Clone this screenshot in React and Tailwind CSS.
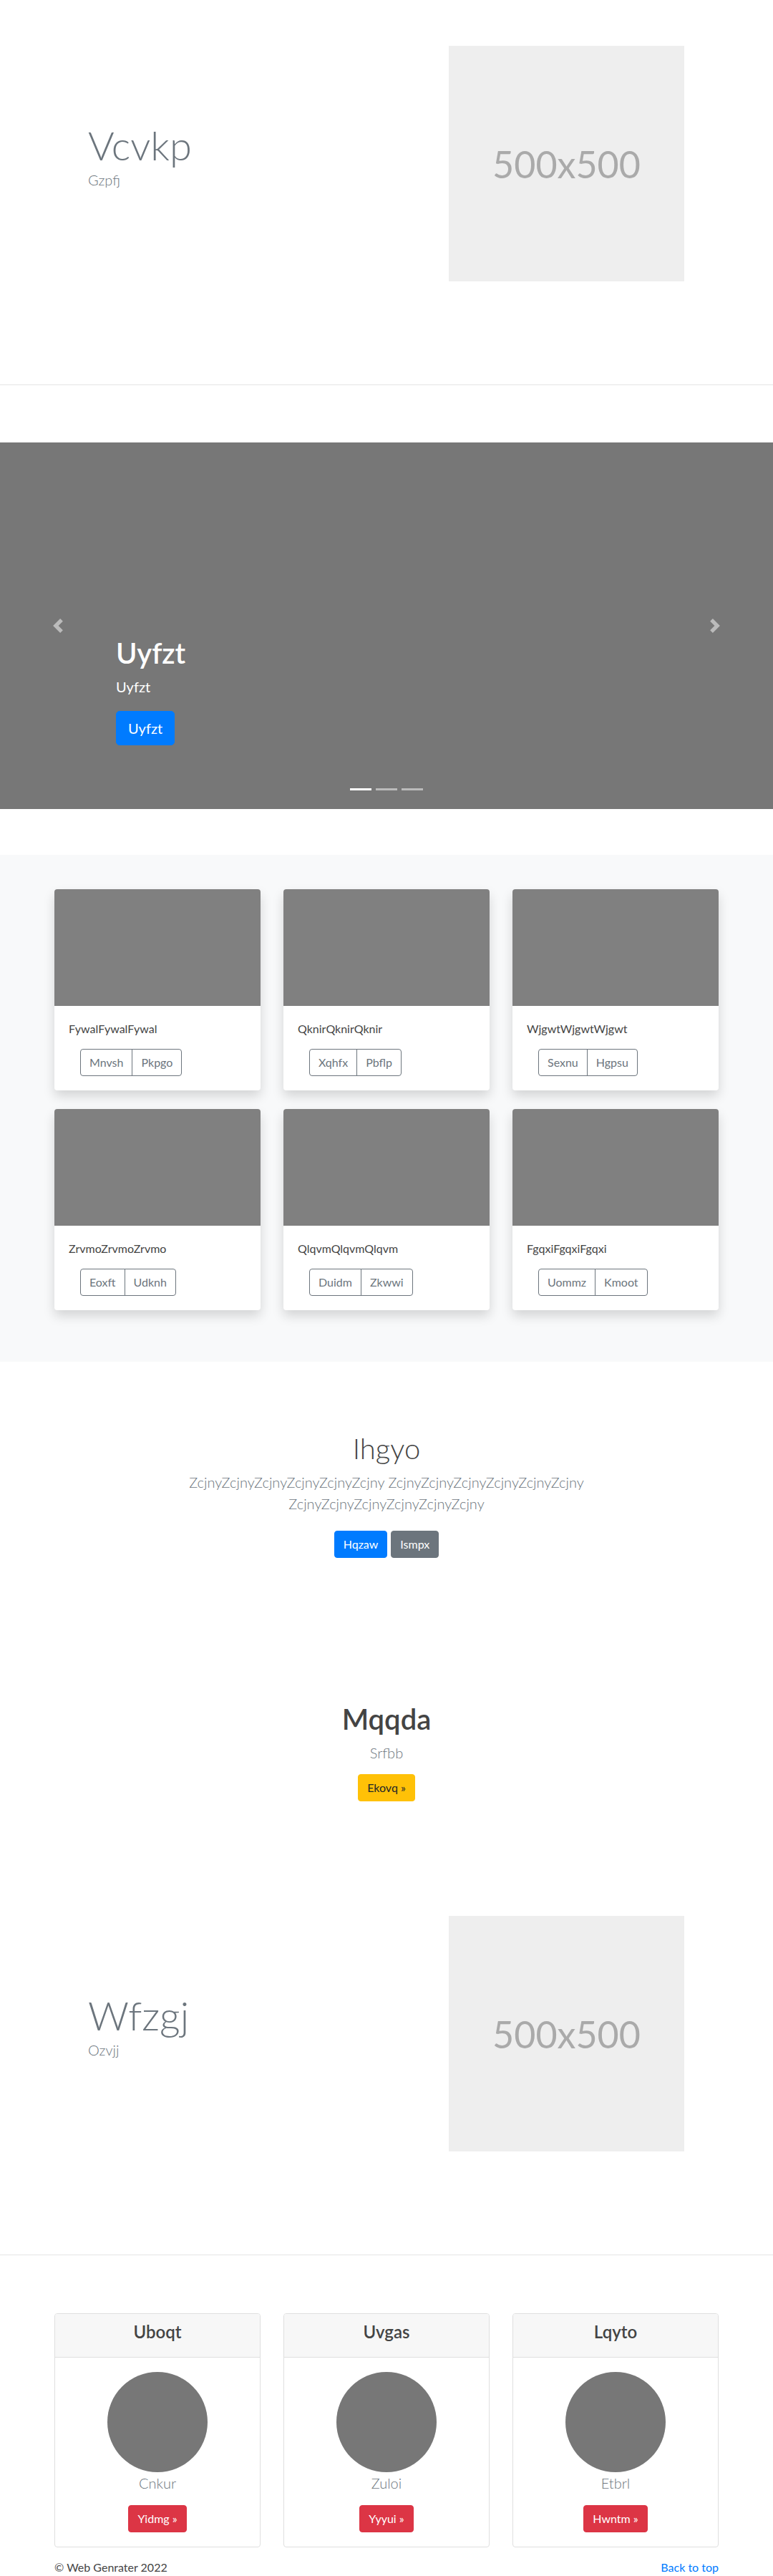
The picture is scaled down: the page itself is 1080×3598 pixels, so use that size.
import React from "react";

const Chev = ({ dir }) => (
  <svg width="20" height="20" viewBox="0 0 8 8" fill="#ffffff" className="opacity-50">
    <path
      d={
        dir === "l"
          ? "M5.25 0l-4 4 4 4 1.5-1.5L4.25 4l2.5-2.5L5.25 0z"
          : "M2.75 0l-1.5 1.5L3.75 4l-2.5 2.5L2.75 8l4-4-4-4z"
      }
    />
  </svg>
);

function Hero({ title, sub }) {
  return (
    <section className="border-b border-[#e5e5e5] pt-[64px] pb-[144px]">
      <div className="mx-auto flex w-[928px] items-center">
        <div className="flex-1 pl-[47px] pb-[22px]">
          <h1 className="text-[56px] leading-[1.2] font-light text-[#6c757d]">{title}</h1>
          <p className="text-[20px] leading-[1.5] font-light text-[#6c757d]">{sub}</p>
        </div>
        <div className="mr-[48px] flex h-[329px] w-[329px] items-center justify-center bg-[#eeeeee]">
          <span className="text-[52px] leading-none text-[#aaaaaa]">500x500</span>
        </div>
      </div>
    </section>
  );
}

const albumCards = [
  { t: "FywalFywalFywal", a: "Mnvsh", b: "Pkpgo" },
  { t: "QknirQknirQknir", a: "Xqhfx", b: "Pbflp" },
  { t: "WjgwtWjgwtWjgwt", a: "Sexnu", b: "Hgpsu" },
  { t: "ZrvmoZrvmoZrvmo", a: "Eoxft", b: "Udknh" },
  { t: "QlqvmQlqvmQlqvm", a: "Duidm", b: "Zkwwi" },
  { t: "FgqxiFgqxiFgqxi", a: "Uommz", b: "Kmoot" },
];

const pricing = [
  { h: "Uboqt", n: "Cnkur", b: "Yidmg »" },
  { h: "Uvgas", n: "Zuloi", b: "Yyyui »" },
  { h: "Lqyto", n: "Etbrl", b: "Hwntm »" },
];

export default function App() {
  return (
    <div className="font-['Lato','Noto_Sans',sans-serif] bg-white text-[#444444]">
      <Hero title="Vcvkp" sub="Gzpfj" />

      {/* Carousel */}
      <div className="relative mt-[80px] h-[512px] bg-[#777777]">
        <div className="absolute left-0 top-0 flex h-full w-[15%] items-center justify-center">
          <Chev dir="l" />
        </div>
        <div className="absolute right-0 top-0 flex h-full w-[15%] items-center justify-center">
          <Chev dir="r" />
        </div>
        <div className="absolute left-[15%] bottom-[89px] text-white">
          <h1 className="mb-2 text-[40px] leading-[1.2] font-semibold">Uyfzt</h1>
          <p className="mb-[19px] text-[20px] leading-[1.5]">Uyfzt</p>
          <button className="rounded-[5px] border border-[#007bff] bg-[#007bff] px-4 py-2 text-[20px] leading-[1.5] text-white">
            Uyfzt
          </button>
        </div>
        <div className="absolute bottom-[26px] left-0 right-0 flex justify-center gap-[6px]">
          <span className="h-[3px] w-[30px] bg-white" />
          <span className="h-[3px] w-[30px] bg-white/50" />
          <span className="h-[3px] w-[30px] bg-white/50" />
        </div>
      </div>

      {/* Album */}
      <section className="mt-[64px] bg-[#f8f9fa] pt-[48px] pb-[72px]">
        <div className="mx-auto grid w-[928px] grid-cols-3 gap-x-[32px] gap-y-[26px]">
          {albumCards.map((c) => (
            <div
              key={c.t}
              className="overflow-hidden rounded-[4px] bg-white shadow-[0_8px_16px_rgba(0,0,0,0.15)]"
            >
              <div className="h-[163px] bg-[#808080]" />
              <div className="p-5">
                <p className="mb-4 text-[16px] leading-[1.5] text-[#444444]">{c.t}</p>
                <div className="ml-4 inline-flex">
                  <button className="rounded-l-[4px] border border-[#6c757d] px-3 py-[6px] text-[16px] leading-[1.5] text-[#6c757d]">
                    {c.a}
                  </button>
                  <button className="-ml-px rounded-r-[4px] border border-[#6c757d] px-3 py-[6px] text-[16px] leading-[1.5] text-[#6c757d]">
                    {c.b}
                  </button>
                </div>
              </div>
            </div>
          ))}
        </div>
      </section>

      {/* Ihgyo */}
      <section className="pt-[97px] text-center">
        <h1 className="mb-2 text-[40px] leading-[1.2] font-light text-[#444444]">Ihgyo</h1>
        <p className="mx-auto mb-[23px] max-w-[610px] text-[20px] leading-[1.5] font-light text-[#6c757d]">
          ZcjnyZcjnyZcjnyZcjnyZcjnyZcjny ZcjnyZcjnyZcjnyZcjnyZcjnyZcjny ZcjnyZcjnyZcjnyZcjnyZcjnyZcjny
        </p>
        <div className="flex justify-center gap-[5px]">
          <button className="rounded-[4px] border border-[#007bff] bg-[#007bff] px-3 py-[6px] text-[16px] leading-[1.5] text-white">
            Hqzaw
          </button>
          <button className="rounded-[4px] border border-[#6c757d] bg-[#6c757d] px-3 py-[6px] text-[16px] leading-[1.5] text-white">
            Ismpx
          </button>
        </div>
      </section>

      {/* Mqqda */}
      <section className="mt-[201px] text-center">
        <h1 className="mb-2 text-[40px] leading-[1.2] font-semibold text-[#444444]">Mqqda</h1>
        <p className="mb-[15px] text-[20px] leading-[1.5] font-light text-[#6c757d]">Srfbb</p>
        <button className="rounded-[4px] border border-[#ffc107] bg-[#ffc107] px-3 py-[6px] text-[16px] leading-[1.5] text-[#212529]">
          Ekovq »
        </button>
      </section>

      <div className="mt-[96px]">
        <Hero title="Wfzgj" sub="Ozvjj" />
      </div>

      {/* Pricing */}
      <section className="mt-[81px]">
        <div className="mx-auto grid w-[928px] grid-cols-3 gap-x-[32px]">
          {pricing.map((p) => (
            <div key={p.h} className="overflow-hidden rounded-[4px] border border-[#dfdfdf] bg-white">
              <div className="h-[61px] border-b border-[#dfdfdf] bg-[#f7f7f7] pt-[11px] text-center">
                <h4 className="text-[24px] leading-[1.2] font-semibold text-[#444444]">{p.h}</h4>
              </div>
              <div className="p-5 text-center">
                <div className="mx-auto h-[140px] w-[140px] rounded-full bg-[#777777]" />
                <p className="mb-4 text-[20px] leading-[1.5] font-light text-[#6c757d]">{p.n}</p>
                <button className="rounded-[4px] border border-[#dc3545] bg-[#dc3545] px-3 py-[6px] text-[16px] leading-[1.5] text-white">
                  {p.b}
                </button>
              </div>
            </div>
          ))}
        </div>
      </section>

      <footer className="mx-auto mt-4 flex w-[928px] justify-between text-[16px] leading-[1.5]">
        <span className="text-[#444444]">© Web Genrater 2022</span>
        <a className="text-[#007bff]" href="#">
          Back to top
        </a>
      </footer>
    </div>
  );
}
